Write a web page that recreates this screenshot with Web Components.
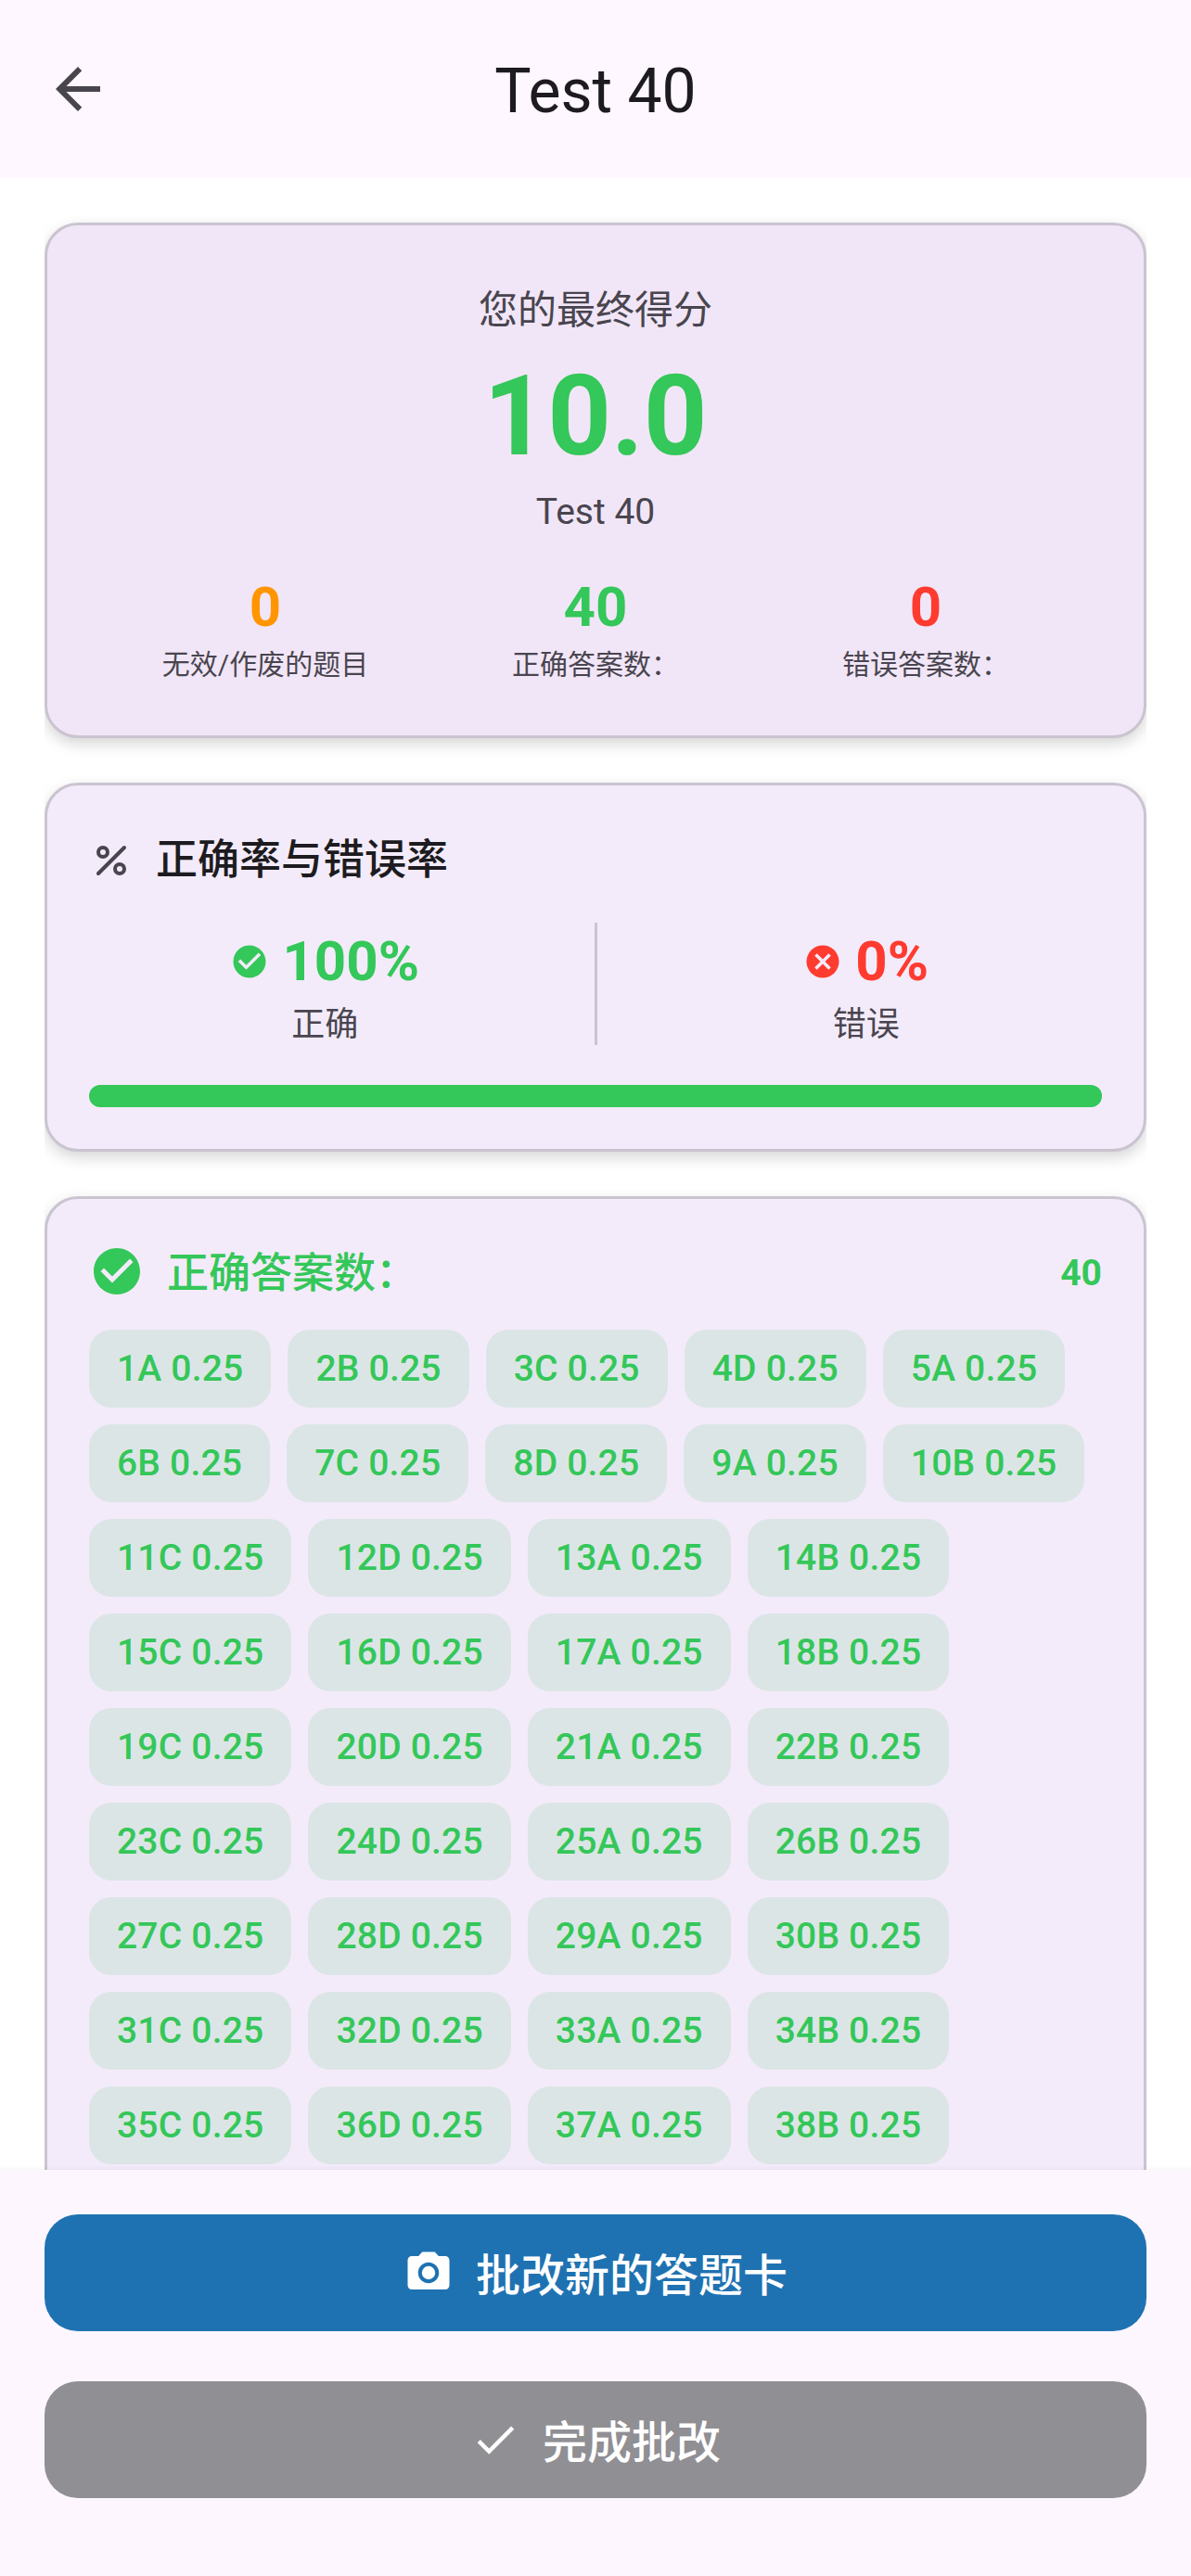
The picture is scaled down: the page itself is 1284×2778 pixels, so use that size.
<!DOCTYPE html>
<html lang="zh">
<head>
<meta charset="utf-8">
<title>Test 40</title>
<style>
  html, body { margin: 0; padding: 0; background: #fff; }
  body { font-family: Roboto, "Noto Sans CJK SC", sans-serif; }
</style>
</head>
<body>
<result-page>
  <app-header slot="header">Test 40</app-header>

  <score-card score="10.0" name="Test 40" label="您的最终得分">
    <stat-item color="#ff9500" value="0">无效/作废的题目</stat-item>
    <stat-item color="#34c759" value="40">正确答案数&#xFF1A;</stat-item>
    <stat-item color="#ff3b30" value="0">错误答案数&#xFF1A;</stat-item>
  </score-card>

  <rate-card heading="正确率与错误率">
    <rate-side slot="left" kind="ok" value="100%">正确</rate-side>
    <rate-side slot="right" kind="bad" value="0%">错误</rate-side>
  </rate-card>

  <answers-card heading="正确答案数&#xFF1A;" count="40"></answers-card>

  <action-button slot="footer" icon="camera" color="#1f72b2">批改新的答题卡</action-button>
  <action-button slot="footer" icon="check" color="#908f94">完成批改</action-button>
</result-page>

<script>
const ICONS = {
  back: '<path d="M20 11H7.83l5.59-5.59L12 4l-8 8 8 8 1.41-1.41L7.83 13H20v-2z"/>',
  percent: '<g fill="none" stroke="currentColor" stroke-width="2" stroke-linecap="round"><circle cx="7.5" cy="7.5" r="2.5"/><circle cx="16.5" cy="16.5" r="2.5"/><path d="M5 19L19 5"/></g>',
  ok: '<path d="M12 2C6.48 2 2 6.48 2 12s4.48 10 10 10 10-4.48 10-10S17.52 2 12 2zm-2 15l-5-5 1.41-1.41L10 14.17l7.59-7.59L19 8l-9 9z"/>',
  bad: '<path d="M12 2C6.47 2 2 6.47 2 12s4.47 10 10 10 10-4.47 10-10S17.53 2 12 2zm5 13.59L15.59 17 12 13.41 8.41 17 7 15.59 10.59 12 7 8.41 8.41 7 12 10.59 15.59 7 17 8.41 13.41 12 17 15.59z"/>',
  camera: '<circle cx="12" cy="12" r="3.2"/><path d="M9 2L7.17 4H4c-1.1 0-2 .9-2 2v12c0 1.1.9 2 2 2h16c1.1 0 2-.9 2-2V6c0-1.1-.9-2-2-2h-3.17L15 2H9zm3 15c-2.76 0-5-2.24-5-5s2.24-5 5-5 5 2.24 5 5-2.24 5-5 5z"/>',
  check: '<path d="M9 16.17L4.83 12l-1.42 1.41L9 19 21 7l-1.41-1.41z"/>',
};

function icon(name, size, color) {
  return `<svg width="${size}" height="${size}" viewBox="0 0 24 24" fill="currentColor" style="color:${color};display:block;flex:none">${ICONS[name]}</svg>`;
}

// the shadow is cut off at the card's left and right edge in the app
const CARD_CSS = `
  :host {
    display: block;
    box-sizing: border-box;
    border: 3px solid #cac4d0;
    border-radius: 36px;
    box-shadow: 0 6px 16px rgba(0,0,0,0.17);
    clip-path: inset(-8px 0 -40px 0);
  }
`;

class ResultPage extends HTMLElement {
  constructor() {
    super();
    this.attachShadow({ mode: "open" });
  }
  connectedCallback() {
    this.shadowRoot.innerHTML = `
      <style>
        :host { display: flex; flex-direction: column; height: 2778px; overflow: hidden; background: #fff; }
        .scroll {
          flex: 1;
          min-height: 0;
          overflow: hidden;
          padding: 48px 48px 0;
          display: flex;
          flex-direction: column;
          gap: 48px;
        }
        .footer {
          background: #fdf6ff;
          padding: 48px 48px 84px;
          display: flex;
          flex-direction: column;
          gap: 54px;
          box-shadow: 0 -2px 4px rgba(0,0,0,0.04);
          position: relative;
        }
      </style>
      <slot name="header"></slot>
      <div class="scroll"><slot></slot></div>
      <div class="footer"><slot name="footer"></slot></div>
    `;
  }
}
customElements.define("result-page", ResultPage);

class AppHeader extends HTMLElement {
  constructor() {
    super();
    this.attachShadow({ mode: "open" });
  }
  connectedCallback() {
    this.shadowRoot.innerHTML = `
      <style>
        :host {
          display: grid;
          grid-template-columns: 168px 1fr 168px;
          align-items: center;
          height: 192px;
          background: #fef7ff;
          color: #1d1b20;
          font: 400 66px Roboto, sans-serif;
        }
        .back { padding-left: 48px; }
        .title { text-align: center; line-height: 80px; padding-top: 6px; }
      </style>
      <div class="back">${icon("back", 72, "#49454f")}</div>
      <div class="title"><slot></slot></div>
      <div></div>
    `;
  }
}
customElements.define("app-header", AppHeader);

class ScoreCard extends HTMLElement {
  constructor() {
    super();
    this.attachShadow({ mode: "open" });
  }
  connectedCallback() {
    this.shadowRoot.innerHTML = `
      <style>
        ${CARD_CSS}
        :host { background: #f1e6f7; padding: 62px 57px 56px; text-align: center; flex: none; }
        .label { font: 400 42px/60px Roboto, "Noto Sans CJK SC", sans-serif; color: #49454f; }
        .score { font: 700 120px/140px Roboto, sans-serif; color: #34c759; margin-top: 14px; }
        .name { font: 400 39px/50px Roboto, sans-serif; color: #49454f; margin-top: 8px; }
        .stats { display: grid; grid-template-columns: repeat(3, 1fr); margin-top: 43px; }
      </style>
      <div class="label">${this.getAttribute("label")}</div>
      <div class="score">${this.getAttribute("score")}</div>
      <div class="name">${this.getAttribute("name")}</div>
      <div class="stats"><slot></slot></div>
    `;
  }
}
customElements.define("score-card", ScoreCard);

class StatItem extends HTMLElement {
  constructor() {
    super();
    this.attachShadow({ mode: "open" });
  }
  connectedCallback() {
    this.shadowRoot.innerHTML = `
      <style>
        :host { display: block; text-align: center; }
        .value { font: 700 60px/70px Roboto, sans-serif; color: ${this.getAttribute("color")}; }
        .text { font: 400 30px/40px Roboto, "Noto Sans CJK SC", sans-serif; color: #49454f; margin-top: 7px; white-space: nowrap; }
      </style>
      <div class="value">${this.getAttribute("value")}</div>
      <div class="text"><slot></slot></div>
    `;
  }
}
customElements.define("stat-item", StatItem);

class RateCard extends HTMLElement {
  constructor() {
    super();
    this.attachShadow({ mode: "open" });
  }
  connectedCallback() {
    this.shadowRoot.innerHTML = `
      <style>
        ${CARD_CSS}
        :host { background: #f3ebfa; padding: 51px 45px 45px; flex: none; }
        .head { display: flex; align-items: center; gap: 24px; font: 500 45px/60px Roboto, "Noto Sans CJK SC", sans-serif; color: #1d1b20; }
        .sides { display: grid; grid-template-columns: 1fr 3px 1fr; column-gap: 36px; margin-top: 37px; height: 132px; }
        .divider { background: #cac4d0; }
        .bar { height: 24px; border-radius: 12px; background: #34c759; margin-top: 43px; }
      </style>
      <div class="head">${icon("percent", 48, "#49454f")}<span>${this.getAttribute("heading")}</span></div>
      <div class="sides">
        <slot name="left"></slot>
        <div class="divider"></div>
        <slot name="right"></slot>
      </div>
      <div class="bar"></div>
    `;
  }
}
customElements.define("rate-card", RateCard);

class RateSide extends HTMLElement {
  constructor() {
    super();
    this.attachShadow({ mode: "open" });
  }
  connectedCallback() {
    const ok = this.getAttribute("kind") === "ok";
    const color = ok ? "#34c759" : "#ff3b30";
    this.shadowRoot.innerHTML = `
      <style>
        :host { display: flex; flex-direction: column; align-items: center; padding-top: 7px; }
        .top { display: flex; align-items: center; gap: 14px; font: 700 60px/70px Roboto, sans-serif; color: ${color}; }
        .text { font: 400 36px/44px Roboto, "Noto Sans CJK SC", sans-serif; color: #49454f; margin-top: 11px; }
      </style>
      <div class="top">${icon(ok ? "ok" : "bad", 42, color)}<span>${this.getAttribute("value")}</span></div>
      <div class="text"><slot></slot></div>
    `;
  }
}
customElements.define("rate-side", RateSide);

class AnswerChip extends HTMLElement {
  constructor() {
    super();
    this.attachShadow({ mode: "open" });
  }
  connectedCallback() {
    this.shadowRoot.innerHTML = `
      <style>
        :host {
          display: flex;
          align-items: center;
          box-sizing: border-box;
          height: 84px;
          padding: 0 30px;
          border-radius: 24px;
          background: #dce5e6;
          color: #34c759;
          font: 500 39px/50px Roboto, sans-serif;
          letter-spacing: 0.2px;
          white-space: nowrap;
        }
      </style>
      <slot></slot>
    `;
  }
}
customElements.define("answer-chip", AnswerChip);

class AnswersCard extends HTMLElement {
  constructor() {
    super();
    this.attachShadow({ mode: "open" });
  }
  connectedCallback() {
    const letters = ["A", "B", "C", "D"];
    let chips = "";
    for (let i = 1; i <= 38; i++) {
      chips += `<answer-chip>${i}${letters[(i - 1) % 4]} 0.25</answer-chip>`;
    }
    this.shadowRoot.innerHTML = `
      <style>
        ${CARD_CSS}
        :host { background: #f3ebfa; padding: 48px 45px 60px; flex: none; }
        .head { display: flex; align-items: center; color: #34c759; }
        .head svg { margin: 0 24px 6px 0; }
        .title { flex: 1; font: 500 45px/60px Roboto, "Noto Sans CJK SC", sans-serif; }
        .count { font: 700 39px/60px Roboto, sans-serif; padding-bottom: 2px; }
        .chips { display: flex; flex-wrap: wrap; gap: 18px; margin-top: 27px; }
      </style>
      <div class="head">
        ${icon("ok", 60, "#34c759")}
        <span class="title">${this.getAttribute("heading")}</span>
        <span class="count">${this.getAttribute("count")}</span>
      </div>
      <div class="chips">${chips}</div>
    `;
  }
}
customElements.define("answers-card", AnswersCard);

class ActionButton extends HTMLElement {
  constructor() {
    super();
    this.attachShadow({ mode: "open" });
  }
  connectedCallback() {
    this.shadowRoot.innerHTML = `
      <style>
        :host {
          display: flex;
          align-items: center;
          justify-content: center;
          gap: 24px;
          height: 126px;
          border-radius: 36px;
          background: ${this.getAttribute("color")};
          color: #fff;
          font: 500 48px/60px Roboto, "Noto Sans CJK SC", sans-serif;
        }
        span { padding-top: 8px; }
      </style>
      ${icon(this.getAttribute("icon"), 54, "#fff")}
      <span><slot></slot></span>
    `;
  }
}
customElements.define("action-button", ActionButton);
</script>
</body>
</html>
